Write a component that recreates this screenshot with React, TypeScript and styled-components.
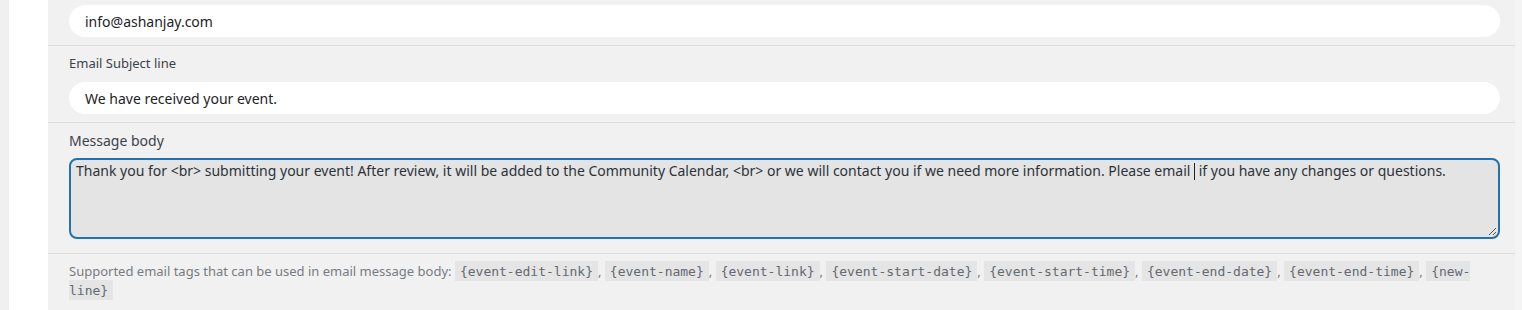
import React from "react";
import styled, { createGlobalStyle } from "styled-components";

const GlobalStyle = createGlobalStyle`
  html, body {
    margin: 0;
    padding: 0;
    background: #f0f0f0;
  }
  * {
    box-sizing: border-box;
  }
`;

const TAGS = [
  "{event-edit-link}",
  "{event-name}",
  "{event-link}",
  "{event-start-date}",
  "{event-start-time}",
  "{event-end-date}",
  "{event-end-time}",
  "{new-line}",
];

const App = () => {
  return (
    <>
      <GlobalStyle />
      <Page>
        <Sheet>
          <Panel>
            <Field>
              <TextInput readOnly defaultValue="info@ashanjay.com" />
            </Field>
            <Field>
              <Label>Email Subject line</Label>
              <TextInput readOnly defaultValue="We have received your event." />
            </Field>
            <Field $bottom={14}>
              <Label $large>Message body</Label>
              <Body role="textbox" aria-multiline="true">
                {"Thank you for <br> submitting your event! After review, it will be added to the Community Calendar, <br> or we will contact you if we need more information. Please email "}
                <Caret />
                {" if you have any changes or questions."}
                <Grip width="9" height="9" viewBox="0 0 9 9">
                  <path d="M8 1 L1 8 M8 5 L5 8" stroke="#555" strokeWidth="1" fill="none" />
                </Grip>
              </Body>
            </Field>
            <Field $top={8} $bottom={12}>
              <Help>
                Supported email tags that can be used in email message body:{" "}
                {TAGS.map((tag, i) => (
                  <React.Fragment key={tag}>
                    <Tag>{tag}</Tag>
                    {i < TAGS.length - 1 ? ", " : ""}
                  </React.Fragment>
                ))}
              </Help>
            </Field>
          </Panel>
          <Edge />
        </Sheet>
      </Page>
    </>
  );
};

export default App;

const Page = styled.div`
  padding-left: 9px;
  height: 310px;
  overflow: hidden;
`;

const Sheet = styled.div`
  display: flex;
  background: #ffffff;
  padding-left: 39px;
  height: 100%;
`;

const Panel = styled.div`
  width: 1467px;
  background: #f1f1f1;
  display: flex;
  flex-direction: column;
  font-family: "Noto Sans", "Open Sans", sans-serif;
`;

const Edge = styled.div`
  flex: 1;
  background: #f4f4f4;
`;

const Field = styled.div<{ $top?: number; $bottom?: number }>`
  padding: ${({ $top }) => $top ?? 8}px 15px ${({ $bottom }) => $bottom ?? 8}px 21px;
  border-bottom: 1px solid #dcdcdc;
  display: flex;
  flex-direction: column;

  &:first-child {
    padding-top: 5px;
  }
  &:last-child {
    border-bottom: none;
  }
`;

const Label = styled.div<{ $large?: boolean }>`
  font-size: ${({ $large }) => ($large ? 14 : 13)}px;
  line-height: ${({ $large }) => ($large ? 20 : 18)}px;
  color: #3c434a;
  margin-bottom: ${({ $large }) => ($large ? 7 : 10)}px;
`;

const TextInput = styled.input`
  display: block;
  width: 100%;
  height: 32px;
  border: none;
  border-radius: 16px;
  background: #ffffff;
  padding: 0 16px;
  font-family: "Noto Sans", "Open Sans", sans-serif;
  font-size: 14px;
  color: #1d2327;
  outline: none;
`;

const Body = styled.div`
  position: relative;
  height: 81px;
  border: 2px solid #2271b1;
  border-radius: 8px;
  background: #e4e4e4;
  padding: 2px 5px;
  font-size: 14px;
  line-height: 18px;
  color: #2c3338;
  white-space: pre-wrap;
`;

const Caret = styled.span`
  display: inline-block;
  width: 1px;
  height: 17px;
  background: #1d2327;
  vertical-align: -4px;
`;

const Grip = styled.svg`
  position: absolute;
  right: 1px;
  bottom: 1px;
`;

const Help = styled.div`
  font-size: 13px;
  line-height: 18px;
  color: #787c82;
`;

const Tag = styled.code`
  font-family: "DejaVu Sans Mono", monospace;
  font-size: 13px;
  background: #e5e5e5;
  color: #646970;
  padding: 3px 5px 2px;
`;
